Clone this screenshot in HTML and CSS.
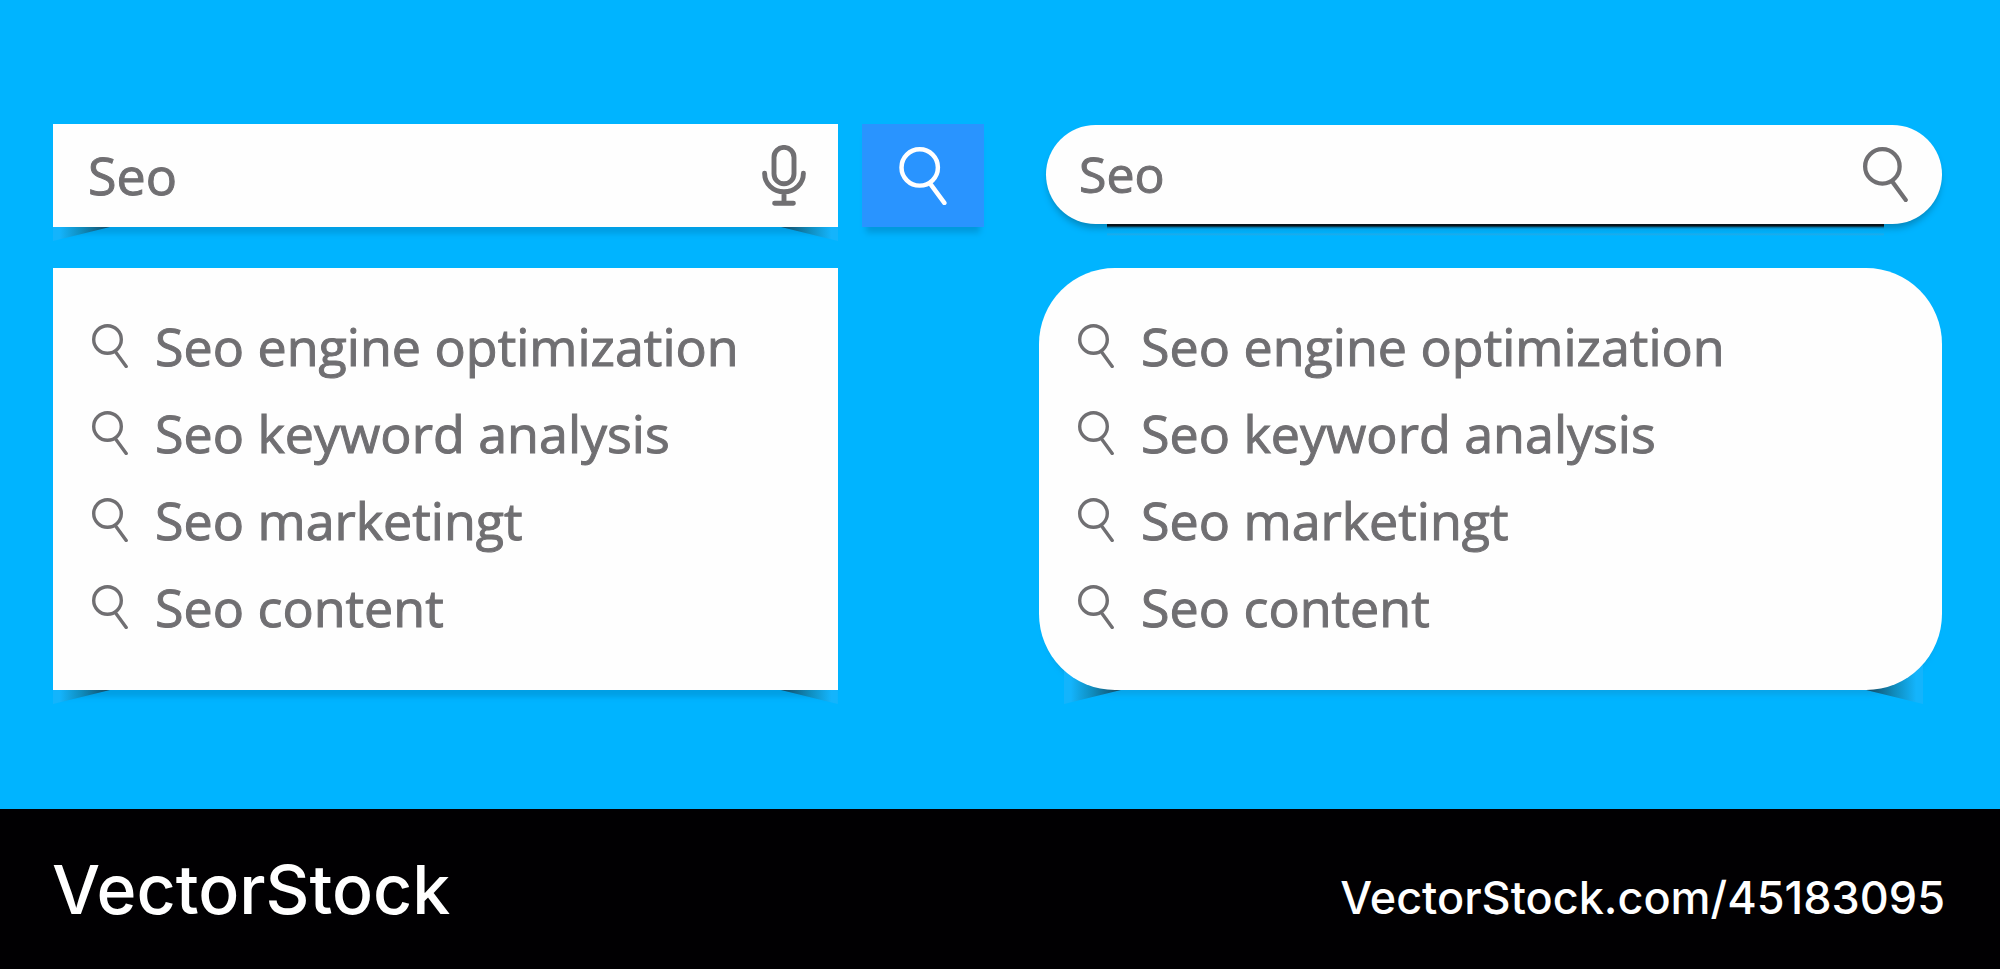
FILE: index.html
```html
<!DOCTYPE html>
<html lang="en">
<head>
<meta charset="utf-8">
<title>Search bars</title>
<link rel="stylesheet" href="styles.css">
</head>
<body>
<svg class="sprite" aria-hidden="true">
  <symbol id="search" viewBox="0 0 36 44">
    <circle cx="15.5" cy="15.5" r="13.8"/>
    <path d="M24 28.5 34.2 42.4"/>
  </symbol>
  <symbol id="mic" viewBox="0 0 44 61">
    <rect x="12" y="2.4" width="20" height="36.4" rx="10"/>
    <path d="M2.6 28.2c0 10.6 8.5 18.6 19.4 18.6s19.4-8 19.4-18.6M22 47v11M12.6 58.2h18.8"/>
  </symbol>
</svg>
<main class="stage">
  <section class="widget">
    <form class="search-row">
      <div class="field lifted">
        <input class="query" type="text" value="Seo" aria-label="Search">
        <button class="icon-button" type="button" aria-label="Voice search"><svg class="icon mic"><use href="#mic"/></svg></button>
      </div>
      <button class="submit" type="button" aria-label="Search"><svg class="icon large"><use href="#search"/></svg></button>
    </form>
    <ul class="suggestions lifted">
      <li><a class="suggestion" href="#"><svg class="icon small"><use href="#search"/></svg>Seo engine optimization</a></li>
      <li><a class="suggestion" href="#"><svg class="icon small"><use href="#search"/></svg>Seo keyword analysis</a></li>
      <li><a class="suggestion" href="#"><svg class="icon small"><use href="#search"/></svg>Seo marketingt</a></li>
      <li><a class="suggestion" href="#"><svg class="icon small"><use href="#search"/></svg>Seo content</a></li>
    </ul>
  </section>
  <section class="widget rounded">
    <form class="search-row">
      <div class="field pill">
        <input class="query" type="text" value="Seo" aria-label="Search">
        <button class="icon-button" type="button" aria-label="Search"><svg class="icon medium"><use href="#search"/></svg></button>
      </div>
    </form>
    <ul class="suggestions lifted">
      <li><a class="suggestion" href="#"><svg class="icon small"><use href="#search"/></svg>Seo engine optimization</a></li>
      <li><a class="suggestion" href="#"><svg class="icon small"><use href="#search"/></svg>Seo keyword analysis</a></li>
      <li><a class="suggestion" href="#"><svg class="icon small"><use href="#search"/></svg>Seo marketingt</a></li>
      <li><a class="suggestion" href="#"><svg class="icon small"><use href="#search"/></svg>Seo content</a></li>
    </ul>
  </section>
</main>
<footer class="footer">
  <span class="brand">VectorStock</span>
  <a class="source" href="#">VectorStock.com/45183095</a>
</footer>
</body>
</html>
```
FILE: styles.css
```css
* { box-sizing: border-box; }

body {
  margin: 0;
  min-height: 100vh;
  display: flex;
  flex-direction: column;
  background: #00b4ff;
  color: #706f72;
  font: 52px/60px "Open Sans", "Noto Sans", sans-serif;
}

.sprite { display: none; }

.icon {
  display: block;
  flex: none;
  fill: none;
  stroke: currentColor;
  stroke-width: 3.4;
  stroke-linecap: round;
}
.small { width: 36px; height: 44px; }
.medium { width: 45px; height: 55px; }
.large { width: 48px; height: 58px; }
.mic { width: 44px; height: 61px; stroke-width: 4.9; }

.stage {
  flex: 1;
  display: grid;
  grid-template-columns: 931fr 903fr;
  gap: 55px;
  align-items: start;
  padding: 124px 58px 100px 53px;
}

.search-row {
  display: grid;
  grid-template-columns: 785fr 122fr;
  gap: 24px;
  height: 103px;
  margin-bottom: 41px;
}

.field {
  position: relative;
  display: flex;
  align-items: center;
  min-width: 0;
  padding: 0 32px 0 35px;
  background: #fefefe;
}

.query {
  flex: 1;
  min-width: 0;
  padding: 0 0 2px;
  border: 0;
  outline: 0;
  background: none;
  color: inherit;
  font: inherit;
}

.query,
.suggestion {
  -webkit-text-stroke: 1px currentColor;
}

.icon-button,
.submit {
  padding: 0;
  border: 0;
  background: none;
  color: inherit;
}

.submit {
  display: grid;
  place-items: center;
  background: #2994ff;
  color: #fff;
  box-shadow: 0 10px 6px -4px #0099dc;
}

.suggestions {
  position: relative;
  width: 84.3%;
  margin: 0;
  padding: 34px 39px 40px;
  list-style: none;
}

.suggestion {
  display: flex;
  align-items: center;
  gap: 27px;
  height: 87px;
  color: inherit;
  text-decoration: none;
  white-space: nowrap;
}

/* Card with a soft band and curled-corner shadows below it */
.lifted {
  isolation: isolate;
  background: none;
  box-shadow: 0 12px 5px -5px #009fe5;
}
.lifted::before {
  content: "";
  position: absolute;
  inset: 0;
  z-index: -1;
  background: #fefefe;
  border-radius: inherit;
}
.lifted::after {
  content: "";
  position: absolute;
  z-index: -2;
  inset: auto 0 -14px;
  height: 54px;
  background:
    linear-gradient(90deg, #14b4fc 12%, #0f8cbd 50%, #16465f) left / 57px 100% no-repeat,
    linear-gradient(270deg, #14b4fc 12%, #0f8cbd 50%, #16465f) right / 57px 100% no-repeat;
  clip-path: polygon(0 0, 100% 0, 100% 100%, calc(100% - 57px) 40px, 57px 40px, 0 100%);
}

.rounded .search-row {
  grid-template-columns: 1fr;
  height: 99px;
  margin: 0 0 44px 7px;
}
.rounded .suggestions {
  width: 100%;
  border-radius: 76px;
  box-shadow: 0 10px 5px -5px #08a5ea;
}
.rounded .lifted::after {
  inset: auto 19px -14px 25px;
}
.rounded { padding-top: 1px; }

.pill {
  padding: 0 34px 0 33px;
  border-radius: 50px;
  box-shadow: 0 6px 7px -2px #0487bd;
}
.pill .query { font-size: 50px; }
.pill::after {
  content: "";
  position: absolute;
  inset: 100% 58px auto 61px;
  height: 12px;
  background: linear-gradient(#06131b 2px, #07658d 3px, #00a5ec 5px, #00b0fa 9px, #22a9e5 10px, #00b4ff);
}

.footer {
  display: flex;
  justify-content: space-between;
  align-items: baseline;
  height: 160px;
  padding: 36px 55px 0 52px;
  background: #010002;
  color: #fff;
  font-family: Inter, "Liberation Sans", sans-serif;
  font-weight: 500;
}
.brand { font-size: 68px; line-height: 88px; }
.source { font-size: 45px; color: inherit; text-decoration: none; }
```
